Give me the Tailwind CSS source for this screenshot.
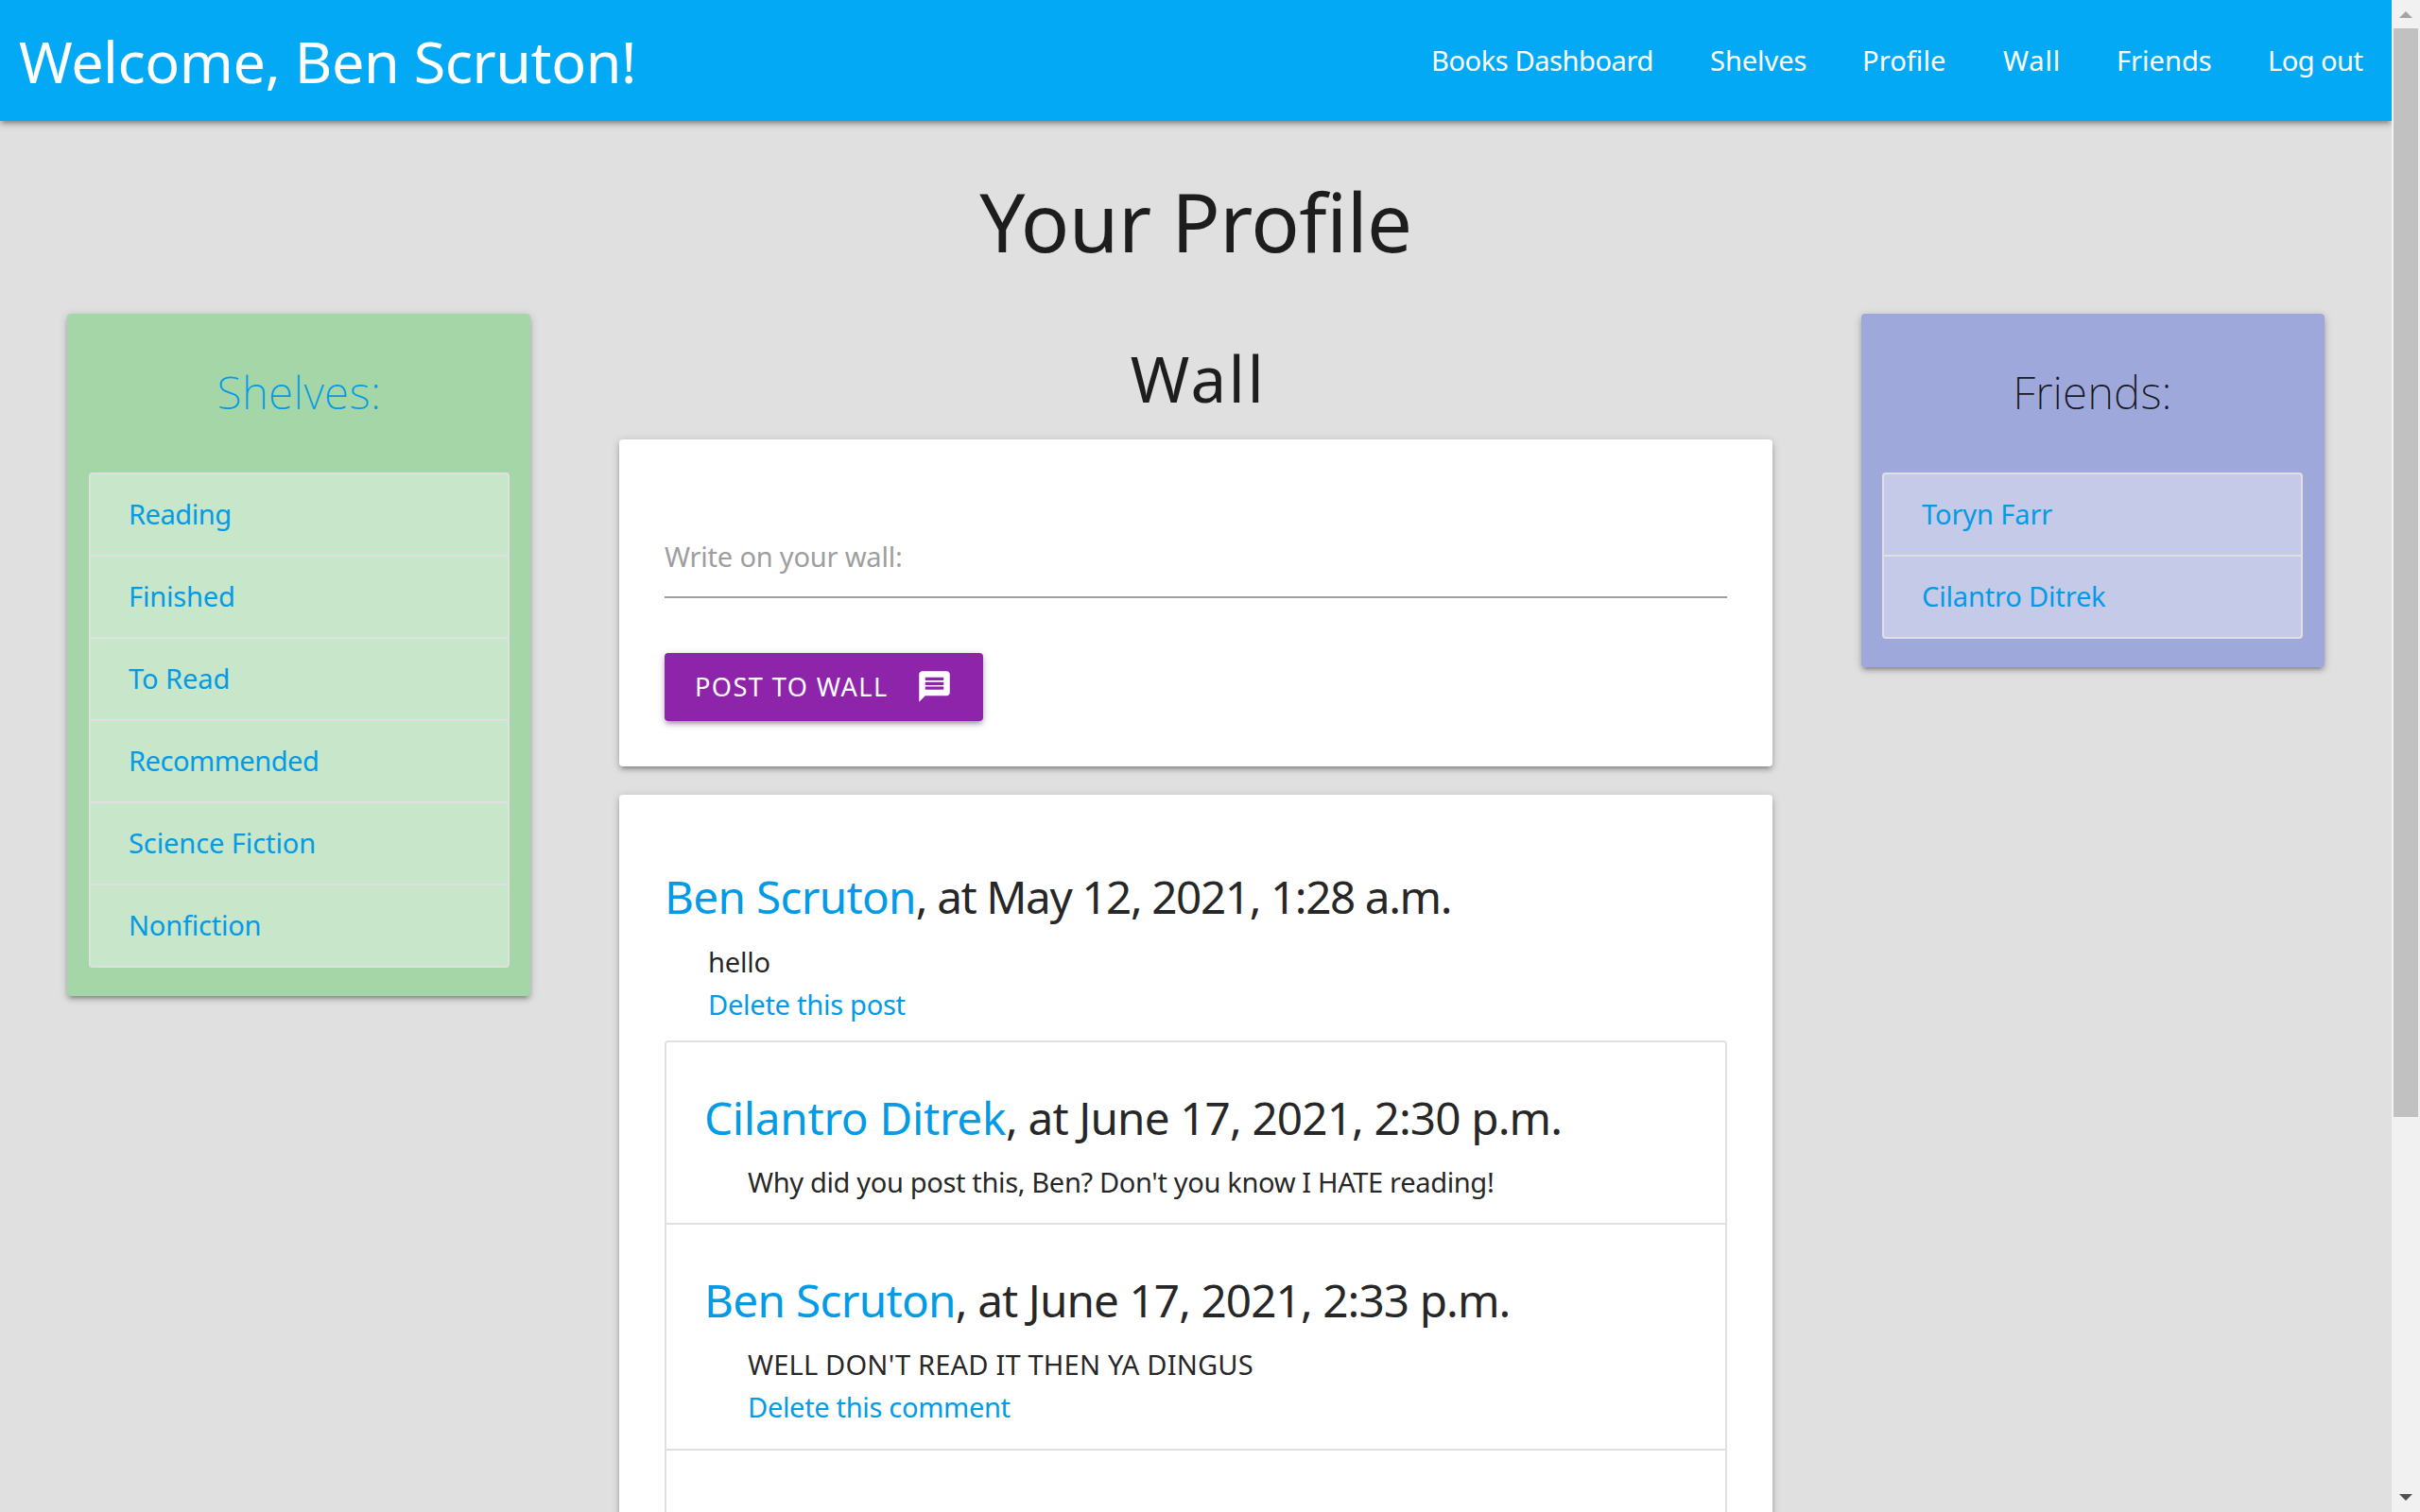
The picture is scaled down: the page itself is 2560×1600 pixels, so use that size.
<!DOCTYPE html>
<html lang="en">
<head>
<meta charset="utf-8">
<title>Your Profile</title>
<script src="https://cdn.jsdelivr.net/npm/@tailwindcss/browser@4"></script>
</head>
<body class="flex h-[1600px] w-[2560px] overflow-hidden bg-[#e0e0e0] font-['Noto_Sans',sans-serif] text-[29.1px] leading-[45px] text-black/87">
<div class="h-[1600px] w-[2530px] overflow-hidden">
  <nav class="flex h-32 items-start justify-between bg-[#03a9f4] pl-5 text-white shadow-[0_4px_4px_0_rgba(0,0,0,0.14),0_6px_2px_-4px_rgba(0,0,0,0.12),0_2px_10px_0_rgba(0,0,0,0.2)]">
    <a class="text-[61.1px] leading-[130px] tracking-[-0.47px] whitespace-nowrap">Welcome, Ben Scruton!</a>
    <ul class="flex whitespace-nowrap leading-[129px]">
      <li class="w-[295px] pl-[30px] tracking-[-0.46px]">Books Dashboard</li>
      <li class="w-[161px] pl-[30px] tracking-[-0.09px]">Shelves</li>
      <li class="w-[149px] pl-[30px] tracking-[0.05px]">Profile</li>
      <li class="w-[120px] pl-[30px] tracking-[0.8px]">Wall</li>
      <li class="w-[160px] pl-[30px] tracking-[-0.02px]">Friends</li>
      <li class="w-[161px] pl-[30px] tracking-[-0.56px]">Log out</li>
    </ul>
  </nav>
  <h3 class="h-[204px] pt-[58px] text-center text-[85.2px] leading-[96px] tracking-[-0.5px]">Your Profile</h3>
  <main class="flex items-start gap-[94px] pl-[71px]">
    <aside class="h-[722px] w-[490px] rounded bg-[#a5d6a7] pr-[22px] pl-[23px] pt-[56px] shadow-[0_4px_4px_0_rgba(0,0,0,0.14),0_6px_2px_-4px_rgba(0,0,0,0.12),0_2px_10px_0_rgba(0,0,0,0.2)]">
      <h5 class="h-[112px] text-center text-[47.7px] leading-[54px] font-extralight tracking-[0.47px] text-[#039be5]">Shelves:</h5>
      <ul class="divide-y-2 divide-[#e0e0e0] overflow-hidden rounded border-2 border-[#e0e0e0] bg-[#c8e6c9] text-[#039be5]">
        <li class="px-10 py-5 tracking-[-0.5px]">Reading</li>
        <li class="px-10 py-5 tracking-[-0.2px]">Finished</li>
        <li class="px-10 py-5 tracking-[-0.11px]">To Read</li>
        <li class="px-10 py-5 tracking-[-0.52px]">Recommended</li>
        <li class="px-10 py-5 tracking-[-0.12px]">Science Fiction</li>
        <li class="px-10 py-5 tracking-[-0.25px]">Nonfiction</li>
      </ul>
    </aside>
    <section class="w-[1220px]">
      <h4 class="h-[133px] pt-[31px] pl-[5px] text-center text-[67.3px] leading-[75px] tracking-[2.4px]">Wall</h4>
      <form class="h-[346px] rounded bg-white px-12 pt-[102px] shadow-[0_4px_4px_0_rgba(0,0,0,0.14),0_6px_2px_-4px_rgba(0,0,0,0.12),0_2px_10px_0_rgba(0,0,0,0.2)]">
        <div class="h-[66px] border-b-2 border-[#9e9e9e] tracking-[-0.23px] text-[#9e9e9e]">Write on your wall:</div>
        <button type="button" class="mt-[58px] flex h-[72px] w-[337px] items-center rounded bg-[#8e24aa] pl-[32px] text-[27.2px] leading-[72px] tracking-[1.4px] text-white shadow-[0_4px_4px_0_rgba(0,0,0,0.14),0_6px_2px_-4px_rgba(0,0,0,0.12),0_2px_10px_0_rgba(0,0,0,0.2)]">
          <span class="w-[234px] text-left">POST TO WALL</span>
          <svg class="mb-[2px] size-[39px]" viewBox="0 0 24 24" fill="currentColor"><path d="M20 2H4c-1.1 0-1.990.9-1.990 2L2 22l4-4h14c1.100 0 2-.9 2-2V4c0-1.100-.9-2-2-2zm-2 12H6v-2h12v2zm0-3H6V9h12v2zm0-3H6V6h12v2z"/></svg>
        </button>
      </form>
      <article class="mt-[30px] h-[900px] rounded bg-white px-12 pt-[81px] shadow-[0_4px_4px_0_rgba(0,0,0,0.14),0_6px_2px_-4px_rgba(0,0,0,0.12),0_2px_10px_0_rgba(0,0,0,0.2)]">
        <h5 class="h-[74px] text-[47.7px] leading-[54px] whitespace-pre"><a class="tracking-[-0.7px] text-[#039be5]">Ben Scruton</a><span class="tracking-[-1.43px]">, at May 12, 2021, 1:28 a.m.</span></h5>
        <p class="pl-[46px] tracking-[-0.2px]">hello</p>
        <p class="pl-[46px] tracking-[-0.29px] text-[#039be5]">Delete this post</p>
        <ul class="mt-[15px] h-[600px] rounded border-2 border-[#e0e0e0]">
          <li class="h-[193px] border-b-2 border-[#e0e0e0] px-10 pt-[53px]">
            <h5 class="h-[73px] text-[47.7px] leading-[54px] whitespace-pre"><a class="tracking-[-0.3px] text-[#039be5]">Cilantro Ditrek</a><span class="tracking-[-0.87px]">, at June 17, 2021, 2:30 p.m.</span></h5>
            <p class="pl-[46px] tracking-[-0.38px]">Why did you post this, Ben? Don't you know I HATE reading!</p>
          </li>
          <li class="h-[239px] border-b-2 border-[#e0e0e0] px-10 pt-[53px]">
            <h5 class="h-[73px] text-[47.7px] leading-[54px] whitespace-pre"><a class="tracking-[-0.7px] text-[#039be5]">Ben Scruton</a><span class="tracking-[-0.92px]">, at June 17, 2021, 2:33 p.m.</span></h5>
            <p class="pl-[46px] tracking-[0.16px]">WELL DON'T READ IT THEN YA DINGUS</p>
            <p class="pl-[46px] tracking-[-0.35px] text-[#039be5]">Delete this comment</p>
          </li>
        </ul>
      </article>
    </section>
    <aside class="h-[374px] w-[490px] rounded bg-[#9fa8da] pr-[23px] pl-[22px] pt-[56px] shadow-[0_4px_4px_0_rgba(0,0,0,0.14),0_6px_2px_-4px_rgba(0,0,0,0.12),0_2px_10px_0_rgba(0,0,0,0.2)]">
      <h5 class="h-[112px] text-center text-[47.7px] leading-[54px] font-extralight tracking-[0.15px]">Friends:</h5>
      <ul class="divide-y-2 divide-[#e0e0e0] overflow-hidden rounded border-2 border-[#e0e0e0] bg-[#c5cae9] text-[#039be5]">
        <li class="px-10 py-5 tracking-[-0.14px]">Toryn Farr</li>
        <li class="px-10 py-5 tracking-[-0.2px]">Cilantro Ditrek</li>
      </ul>
    </aside>
  </main>
</div>
<!-- Window scrollbar -->
<div class="flex h-[1600px] w-[30px] flex-col items-center bg-[#f1f1f1]">
  <svg class="h-[30px] w-[30px] shrink-0" viewBox="0 0 30 30"><path d="M8 19h14l-7-7z" fill="#a3a3a3"/></svg>
  <div class="h-[1152px] w-[26px] bg-[#c1c1c1]"></div>
  <svg class="mt-auto h-[30px] w-[30px] shrink-0" viewBox="0 0 30 30"><path d="M8 11h14l-7 7z" fill="#505050"/></svg>
</div>
</body>
</html>
